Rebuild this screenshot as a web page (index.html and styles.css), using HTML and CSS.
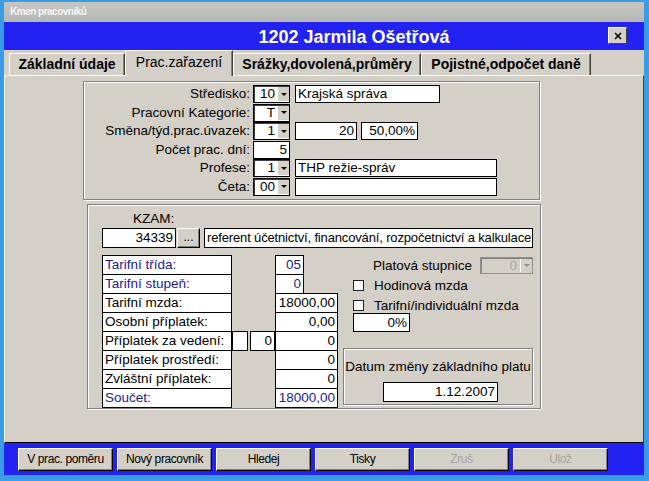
FILE: index.html
```html
<!DOCTYPE html>
<html lang="cs">
<head>
<meta charset="utf-8">
<title>Kmen pracovníků</title>
<link rel="stylesheet" href="styles.css">
</head>
<body>
<div class="window">
  <div class="titlebar">Kmen pracovníků</div>
  <div class="header">
    <span class="header-title">1202 Jarmila Ošetřová</span>
    <span class="close-btn"><svg width="8" height="8" viewBox="0 0 8 8"><path d="M1 1L7 7M7 1L1 7" stroke="#000" stroke-width="1.6" fill="none"/></svg></span>
  </div>
  <div class="tabs">
    <div class="tab tab-1">Základní údaje</div>
    <div class="tab tab-2 active">Prac.zařazení</div>
    <div class="tab tab-3">Srážky,dovolená,průměry</div>
    <div class="tab tab-4">Pojistné,odpočet daně</div>
  </div>
  <div class="panel">
    <div class="group group-top">
      <div class="form-grid">
        <div class="lbl">Středisko:</div>
        <div class="combo"><span class="combo-val">10</span><span class="combo-btn"></span></div>
        <div class="fields"><div class="field w-stred">Krajská správa</div></div>

        <div class="lbl">Pracovní Kategorie:</div>
        <div class="combo"><span class="combo-val">T</span><span class="combo-btn"></span></div>
        <div class="fields"></div>

        <div class="lbl">Směna/týd.prac.úvazek:</div>
        <div class="combo"><span class="combo-val">1</span><span class="combo-btn"></span></div>
        <div class="fields"><div class="field right w-hours">20</div><div class="field right w-pct">50,00%</div></div>

        <div class="lbl">Počet prac. dní:</div>
        <div class="field right">5</div>
        <div class="fields"></div>

        <div class="lbl">Profese:</div>
        <div class="combo"><span class="combo-val">1</span><span class="combo-btn"></span></div>
        <div class="fields"><div class="field w-long">THP režie-správ</div></div>

        <div class="lbl">Četa:</div>
        <div class="combo"><span class="combo-val">00</span><span class="combo-btn"></span></div>
        <div class="fields"><div class="field w-long"></div></div>
      </div>
    </div>

    <div class="group group-bottom">
      <div class="kzam-label">KZAM:</div>
      <div class="kzam-row">
        <div class="field right kzam-code">34339</div>
        <div class="dots-btn">...</div>
        <div class="field kzam-name">referent účetnictví, financování, rozpočetnictví a kalkulace</div>
      </div>
      <div class="lower-body">
        <div class="tariff">
          <div class="cell c-label navy">Tarifní třída:</div>
          <div class="cell c-val narrow navy">05</div>
          <div class="cell c-label navy">Tarifní stupeň:</div>
          <div class="cell c-val narrow navy">0</div>
          <div class="cell c-label">Tarifní mzda:</div>
          <div class="cell c-val">18000,00</div>
          <div class="cell c-label">Osobní příplatek:</div>
          <div class="cell c-val">0,00</div>
          <div class="cell c-label">Příplatek za vedení:</div>
          <div class="cell c-small"></div>
          <div class="cell c-box">0</div>
          <div class="cell c-val">0</div>
          <div class="cell c-label">Příplatek prostředí:</div>
          <div class="cell c-val">0</div>
          <div class="cell c-label">Zvláštní příplatek:</div>
          <div class="cell c-val">0</div>
          <div class="cell c-label navy">Součet:</div>
          <div class="cell c-val navy">18000,00</div>
        </div>
        <div class="right-col">
          <div class="scale-row">
            <span>Platová stupnice</span>
            <div class="combo combo-disabled"><span class="combo-val">0</span><span class="combo-btn"></span></div>
          </div>
          <div class="check-row check-first"><span class="checkbox"></span><span>Hodinová mzda</span></div>
          <div class="check-row check-second"><span class="checkbox"></span><span>Tarifní/individuální mzda</span></div>
          <div class="field right pct-field">0%</div>
          <div class="group date-group">
            <div class="date-title">Datum změny základního platu</div>
            <div class="field right date-field">1.12.2007</div>
          </div>
        </div>
      </div>
    </div>
  </div>
  <div class="footer">
    <div class="btn">V prac. poměru</div>
    <div class="btn">Nový pracovník</div>
    <div class="btn">Hledej</div>
    <div class="btn">Tisky</div>
    <div class="btn disabled">Zruš</div>
    <div class="btn disabled">Ulož</div>
  </div>
</div>
</body>
</html>
```
FILE: styles.css
```css
* { box-sizing: border-box; }
html, body { margin: 0; padding: 0; }
body {
  width: 649px;
  height: 481px;
  overflow: hidden;
  background: #3b9ce6;
  font-family: "Liberation Sans", Arial, sans-serif;
  font-size: 13.5px;
  color: #000;
}
.window {
  display: flex;
  flex-direction: column;
  width: 649px;
  height: 481px;
  padding: 2px 5px 6px 4px;
}
.titlebar {
  height: 20px;
  flex: none;
  background: linear-gradient(#c6c6c2, #b6b6b2);
  color: #f6f6f6;
  font-weight: bold;
  font-size: 10px;
  letter-spacing: -0.5px;
  line-height: 20px;
  padding-left: 6px;
}
.header {
  height: 28px;
  flex: none;
  background: #2222f2;
  display: flex;
  align-items: flex-start;
}
.header-title {
  flex: 1;
  text-align: center;
  padding-left: 96px;
  color: #fff;
  font-weight: bold;
  font-size: 18px;
  line-height: 30px;
}
.close-btn {
  margin: 5px 17px 0 0;
  width: 19px;
  height: 17px;
  background: #d4d0c8;
  border: 1px solid;
  border-color: #fff #404040 #404040 #fff;
  display: flex;
  align-items: center;
  justify-content: center;
}
.tabs {
  height: 25px;
  flex: none;
  background: #d4d0c8;
  display: flex;
  align-items: flex-end;
  padding-left: 5px;
}
.tab {
  height: 22px;
  border-top: 1px solid #fff;
  border-left: 1px solid #fff;
  border-right: 1px solid #404040;
  box-shadow: inset -1px 0 #808080;
  font-weight: bold;
  font-size: 14px;
  line-height: 21px;
  text-align: center;
  white-space: nowrap;
}
.tab-1 { width: 116px; }
.tab-2 { width: 108px; }
.tab-3 { width: 188px; }
.tab-4 { width: 170px; }
.tab.active {
  height: 26px;
  margin-bottom: -1px;
  position: relative;
  z-index: 1;
  background: #d4d0c8;
  font-weight: normal;
  line-height: 22px;
}
.panel {
  height: 368px;
  flex: none;
  background: #d4d0c8;
  border-top: 1px solid #fff;
  border-left: 1px solid #fff;
  border-right: 1px solid #404040;
  border-bottom: 1px solid #000;
}
.group {
  border: 1px solid #808080;
  box-shadow: inset 1px 1px #fff, 1px 1px #fff;
}
.group-top {
  margin: 5px 0 0 78px;
  width: 457px;
  height: 119px;
  padding-top: 3px;
}
.form-grid {
  display: grid;
  grid-template-columns: 169px 37px 1fr;
  grid-auto-rows: 18.6px;
}
.lbl {
  text-align: right;
  padding-right: 3px;
  line-height: 18px;
  white-space: nowrap;
}
.combo {
  height: 18px;
  display: flex;
  background: #fff;
  border: 1px solid #000;
  box-shadow: inset 1px 1px #404040;
}
.combo-val {
  flex: 1;
  text-align: right;
  padding-right: 2px;
  line-height: 16px;
}
.combo-btn {
  width: 12px;
  margin: 1px 0;
  background: #d4d0c8;
  border-left: 1px solid #fff;
  display: flex;
  align-items: center;
  justify-content: center;
}
.combo-btn::after {
  content: "";
  border-left: 3px solid transparent;
  border-right: 3px solid transparent;
  border-top: 3px solid #000;
}
.fields {
  display: flex;
  gap: 4px;
  padding-left: 5px;
}
.field {
  height: 18px;
  background: #fff;
  border: 1px solid #000;
  padding: 0 2px;
  line-height: 16px;
  white-space: nowrap;
  overflow: hidden;
}
.field.right { text-align: right; }
.w-stred { width: 145px; }
.w-hours { width: 62px; }
.w-pct { width: 57px; }
.w-long { width: 202px; }

.group-bottom {
  margin: 4px 0 0 82px;
  width: 454px;
  height: 205px;
}
.kzam-label {
  margin: 6px 0 0 45px;
  line-height: 16px;
}
.kzam-row {
  display: flex;
  margin-top: 1px;
  padding-left: 14px;
}
.kzam-code { width: 74px; height: 20px; line-height: 18px; }
.dots-btn {
  width: 23px;
  height: 20px;
  margin-left: 1px;
  background: #d4d0c8;
  border: 1px solid;
  border-color: #fff #000 #000 #fff;
  box-shadow: inset -1px -1px #808080;
  text-align: center;
  line-height: 16px;
  font-size: 12px;
}
.kzam-name {
  width: 329px;
  height: 20px;
  margin-left: 4px;
  line-height: 18px;
  font-size: 13px;
  letter-spacing: -0.15px;
}

.lower-body {
  display: flex;
  margin-top: 7px;
  padding-left: 14px;
}
.tariff {
  display: grid;
  grid-template-columns: 130px 16px 2px 25px 63px;
  grid-auto-rows: 19px;
  width: 236px;
  flex: none;
}
.cell {
  height: 20px;
  border: 1px solid #000;
  background: #fff;
  line-height: 18px;
  padding: 0 2px;
  white-space: nowrap;
  overflow: hidden;
}
.c-label { grid-column: 1; }
.c-small { grid-column: 2; }
.c-box { grid-column: 4; text-align: right; }
.c-val { grid-column: 5; text-align: right; }
.c-val.narrow { width: 29px; }
.navy { color: #1c1c8c; }

.right-col {
  width: 190px;
  margin-left: 5px;
  display: flex;
  flex-direction: column;
  flex: none;
}
.scale-row {
  display: flex;
  justify-content: flex-end;
  align-items: center;
  gap: 8px;
  height: 17px;
  margin-top: 2px;
}
.combo-disabled {
  width: 53px;
  height: 17px;
  background: #d4d0c8;
  border: 1px solid #909090;
  box-shadow: inset 1px 1px #808080;
  color: #a8a8a8;
}
.combo-disabled .combo-val { line-height: 15px; padding-right: 3px; }
.combo-disabled .combo-btn::after { border-top-color: #909090; }
.check-row {
  display: flex;
  align-items: center;
  gap: 10px;
  margin-left: 10px;
  height: 16px;
}
.check-first { margin-top: 3px; }
.check-second { margin-top: 4px; }
.checkbox {
  width: 11px;
  height: 11px;
  background: #fff;
  border: 1px solid #202020;
  flex: none;
}
.pct-field {
  width: 57px;
  height: 19px;
  margin-left: 10px;
  line-height: 17px;
}
.date-group {
  margin-top: 16px;
  width: 190px;
  height: 57px;
  display: flex;
  flex-direction: column;
}
.date-title {
  margin-top: 10px;
  text-align: center;
  line-height: 16px;
  white-space: nowrap;
}
.date-field {
  margin: 7px 0 0 39px;
  width: 115px;
  height: 20px;
  line-height: 18px;
}

.footer {
  height: 32px;
  flex: none;
  background: #2222f2;
  display: flex;
  gap: 4px;
  padding: 5px 0 0 14px;
}
.btn {
  width: 95px;
  height: 23px;
  background: #d4d0c8;
  border: 1px solid;
  border-color: #fff #000 #000 #fff;
  box-shadow: inset -1px -1px #808080;
  font-size: 12px;
  letter-spacing: -0.4px;
  text-align: center;
  line-height: 21px;
  white-space: nowrap;
}
.btn.disabled { color: #a4a4a0; }
```
